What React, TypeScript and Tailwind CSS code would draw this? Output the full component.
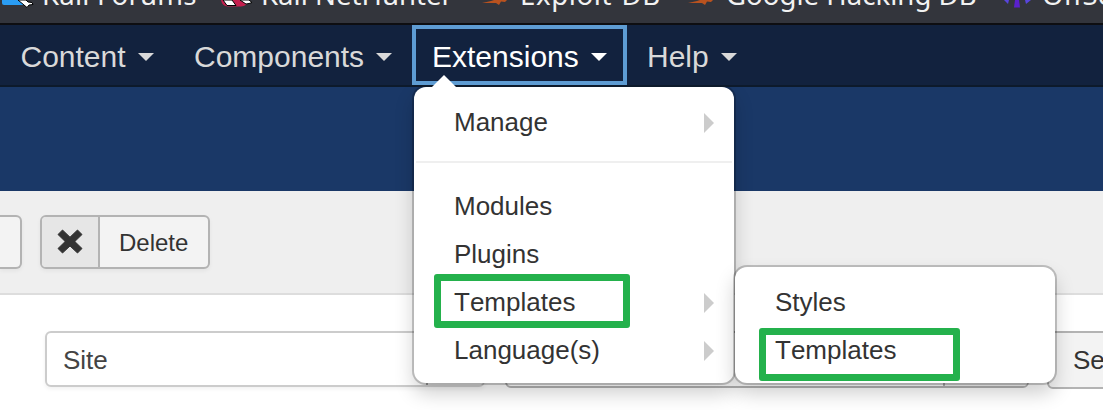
import React from "react";

const navItems = [
  { label: "Content", width: "w-[174px]", pad: "pl-[20.5px] pr-[20px]", active: false },
  { label: "Components", width: "w-[238px]", pad: "px-[20px]", active: false },
  { label: "Extensions", width: "w-[215px]", pad: "px-[16px]", active: true },
  { label: "Help", width: "w-[130px]", pad: "px-[20px]", active: false },
];

function Bookmark({
  label,
  children,
  width,
  spacing = "tracking-normal",
}: {
  label: string;
  width: string;
  spacing?: string;
  children: React.ReactNode;
}) {
  return (
    <div className={`flex h-[23px] shrink-0 items-start ${width}`}>
      <svg className="h-[14px] w-[40px] shrink-0" viewBox="0 0 40 14">
        {children}
      </svg>
      <span
        className={`-mt-[25px] ml-[1px] whitespace-nowrap font-['Noto_Sans',sans-serif] text-[27.6px] leading-[38px] text-[#f2f2f2] ${spacing}`}
      >
        {label}
      </span>
    </div>
  );
}

function MenuRow({ label, arrow = false }: { label: string; arrow?: boolean }) {
  return (
    <div className="flex h-[48px] items-center justify-between pr-[20px] pl-[40px] text-[26px] leading-[36px] text-[#333]">
      <span>{label}</span>
      {arrow && (
        <svg className="mt-[2px] h-[20px] w-[10px]" viewBox="0 0 10 20">
          <path d="M0 0L10 10L0 20Z" fill="#ccc" />
        </svg>
      )}
    </div>
  );
}

export default function App() {
  return (
    <div className="relative h-[410px] w-[1103px] overflow-hidden bg-white font-['Liberation_Sans',Arial,sans-serif] [font-kerning:none]">
      <div className="flex h-[25px] overflow-hidden border-b-2 border-[#0e0e11] bg-[#33353c]">
        <Bookmark label="Kali Forums" width="w-[219px]" spacing="tracking-[0.2px] pl-[1px]">
          <path d="M2 0H20L24 5H4Q2 5 2 3Z" fill="#2a9df4" />
          <path d="M18 0L27 7.5L29 5L33 4.5L32 2.5L28 2L26 0Z" fill="#fff" stroke="#000" />
        </Bookmark>
        <Bookmark label="Kali NetHunter" width="w-[260px]" spacing="pl-[1px]">
          <path d="M2 0Q3 6 9 6.5H22Q28 6 30 0Z" fill="#c41f4e" />
          <path d="M4 0L8 5.5H17L13 0ZM21 0L27 4L30 3.5L33 2.5L30 0Z" fill="#fff" stroke="#000" />
        </Bookmark>
        <Bookmark label="Exploit-DB" width="w-[206px]" spacing="tracking-[0.6px]">
          <path d="M3 3L12 1L15 0H28L26 2L22 1.5L20 5L17 3L8 3Z" fill="#b9521f" />
        </Bookmark>
        <Bookmark label="Google Hacking DB" width="w-[316px]">
          <path d="M3 3L12 1L15 0H28L26 2L22 1.5L20 5L17 3L8 3Z" fill="#b9521f" />
        </Bookmark>
        <Bookmark label="OffSec" width="w-[110px]">
          <path d="M3 0H8L7 4ZM24 0H30L25 4Z" fill="#5845dc" />
          <path d="M14 0H18L19 7.5H13Z" fill="#5a20cc" />
        </Bookmark>
      </div>

      <nav className="flex h-[62px] border-b-2 border-[#0d1a2b] bg-[#12223e]">
        {navItems.map((n) => (
          <div
            key={n.label}
            className={`flex h-[60px] shrink-0 items-center justify-between text-[30px] leading-[40px] ${n.width} ${n.pad} ${
              n.active ? "border-4 border-[#5e9cd3] text-white" : "text-[#d9d9d9]"
            }`}
          >
            <span className="mt-[3px]">{n.label}</span>
            <svg className="mt-[3px] h-[8px] w-[16px]" viewBox="0 0 16 8">
              <path d="M0 0H16L8 8Z" fill="currentColor" />
            </svg>
          </div>
        ))}
      </nav>

      <header className="h-[104px] bg-[#1a3867]" />

      <div className="flex h-[104px] gap-[18px] border-b-2 border-[#ddd] bg-[#efefef] pt-[24px]">
        <div className="h-[54px] w-[22px] rounded-r-[6px] border-2 border-l-0 border-[#b3b3b3] bg-[#f3f3f3] shadow-[0_2px_4px_rgba(0,0,0,0.05)]" />
        <div className="flex h-[54px] w-[170px] overflow-hidden rounded-[6px] border-2 border-[#b3b3b3] bg-[#f3f3f3] shadow-[0_2px_4px_rgba(0,0,0,0.05)]">
          <div className="flex w-[58px] items-center justify-center border-r-2 border-[#b3b3b3] bg-[#e6e6e6]">
            <svg className="h-[26px] w-[26px]" viewBox="0 0 26 26">
              <path
                d="M5.5 1L13 8.2L20.5 1L25 5.5L17.8 12.5L25 19.5L20.5 24L13 17L5.5 24L1 19.5L8.2 12.5L1 5.5Z"
                fill="#333"
                stroke="#333"
                strokeLinejoin="round"
              />
            </svg>
          </div>
          <span className="pt-[8px] pl-[19px] text-[24px] leading-[36px] text-[#333]">Delete</span>
        </div>
      </div>

      <div className="flex pt-[36px] pl-[45px]">
        <div className="flex h-[56px] w-[440px] shrink-0 rounded-[6px] border-2 border-[#ccc] bg-white pl-[16px] text-[26px] leading-[54px] text-[#444] shadow-[0_2px_4px_rgba(0,0,0,0.06)]">
          <span className="flex-1">Site</span>
          <span className="w-[57px] rounded-r-[4px] border-l-2 border-[#aaa] bg-white" />
        </div>
        <div className="ml-[20px] flex h-[57px] w-[524px] shrink-0 rounded-[6px] border-2 border-[#b3b3b3] bg-white">
          <span className="flex-1" />
          <span className="w-[84px] rounded-r-[4px] border-l-2 border-[#b3b3b3] bg-[#f3f3f3]" />
        </div>
        <div className="ml-[18px] h-[58px] w-[200px] shrink-0 rounded-[6px] border-2 border-[#b3b3b3] bg-[#f3f3f3] pl-[24px] text-[26px] leading-[54px] text-[#333]">
          Search
        </div>
      </div>

      <div className="absolute top-[87px] left-[414px] h-[296px] w-[320px] rounded-[12px] bg-white pt-[11px] shadow-[0_0_0_2px_rgba(0,0,0,0.2),0_10px_20px_rgba(0,0,0,0.2)] [clip-path:inset(0_-40px_-40px_-40px)]">
        <MenuRow label="Manage" arrow />
        <div className="mx-[2px] mt-[15px] mb-[19px] h-[2px] bg-[#efefef]" />
        <MenuRow label="Modules" />
        <MenuRow label="Plugins" />
        <MenuRow label="Templates" arrow />
        <MenuRow label="Language(s)" arrow />
      </div>
      <svg className="absolute top-[75px] left-[432px] h-[12px] w-[24px]" viewBox="0 0 24 12">
        <path d="M0 12L12 0L24 12Z" fill="#fff" />
      </svg>

      <div className="absolute top-[267px] left-[735px] h-[116px] w-[320px] rounded-[12px] bg-white pt-[11px] shadow-[0_0_0_2px_rgba(0,0,0,0.2),0_10px_20px_rgba(0,0,0,0.2)]">
        <MenuRow label="Styles" />
        <MenuRow label="Templates" />
      </div>

      <div className="absolute top-[274px] left-[434px] h-[54px] w-[196px] rounded-[3px] border-[7px] border-[#24b14c]" />
      <div className="absolute top-[328px] left-[759px] h-[53px] w-[201px] rounded-[3px] border-[7px] border-[#24b14c]" />
    </div>
  );
}
